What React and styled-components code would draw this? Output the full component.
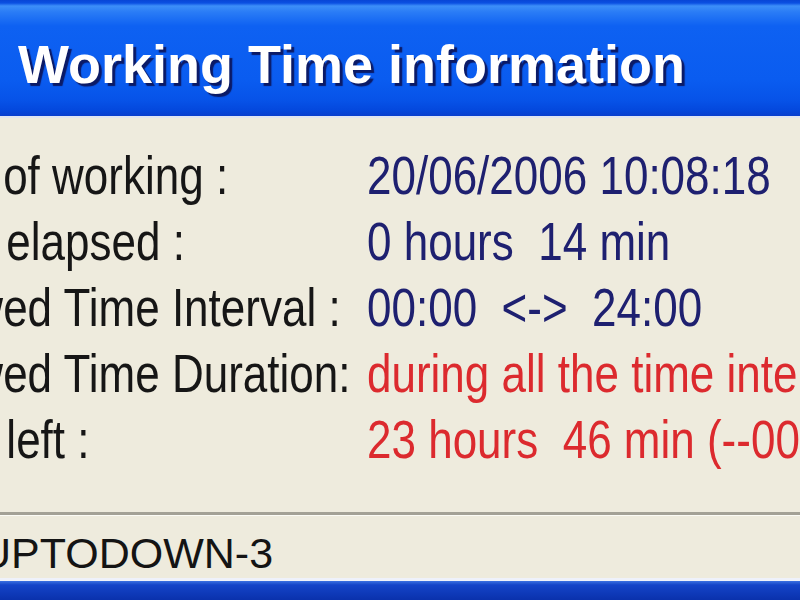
import React from "react";
import styled, { createGlobalStyle } from "styled-components";

const GlobalStyle = createGlobalStyle`
  html, body {
    margin: 0;
    padding: 0;
    width: 800px;
    height: 600px;
    overflow: hidden;
    background: #eeebdd;
  }
`;

const rows = [
  { label: "Start of working :", value: "20/06/2006 10:08:18", tone: "info" },
  { label: "Time elapsed :", value: "0 hours\u00a0\u00a014 min", tone: "info" },
  { label: "Allowed Time Interval :", value: "00:00\u00a0\u00a0<->\u00a0\u00a024:00", tone: "info" },
  { label: "Allowed Time Duration:", value: "during all the time interval", tone: "alert" },
  { label: "Time left :", value: "23 hours\u00a0\u00a046 min (--00:14)", tone: "alert" },
];

const ClockIcon = () => (
  <svg width="48" height="48" viewBox="0 0 48 48">
    <circle cx="24" cy="24" r="20" fill="#f4f6fb" stroke="#1b2a6e" strokeWidth="4" />
    <path d="M24 12 V24 H34" fill="none" stroke="#1b2a6e" strokeWidth="4" />
  </svg>
);

const App = () => {
  return (
    <>
      <GlobalStyle />
      <Window>
        <TitleBar>
          <TitleIcon>
            <ClockIcon />
          </TitleIcon>
          <Title>Working Time information</Title>
        </TitleBar>
        <Body>
          <InfoGrid>
            {rows.map((row) => (
              <React.Fragment key={row.label}>
                <Label>
                  <Glyphs>{row.label}</Glyphs>
                </Label>
                <Value $tone={row.tone}>
                  <Glyphs>{row.value}</Glyphs>
                </Value>
              </React.Fragment>
            ))}
          </InfoGrid>
        </Body>
        <Divider />
        <StatusBar>UPTODOWN-3</StatusBar>
        <BottomFrame />
      </Window>
    </>
  );
};

export default App;

const Window = styled.div`
  margin-left: -110px;
  width: 1240px;
  height: 600px;
  display: flex;
  flex-direction: column;
  background: #eeebdd;
`;

const TitleBar = styled.div`
  height: 118px;
  box-sizing: border-box;
  padding: 12px 0 0 64px;
  display: flex;
  align-items: center;
  gap: 16px;
  border-bottom: 2px solid #dfe5f2;
  background: linear-gradient(
    to bottom,
    #0846d6 0px,
    #0b50e2 3px,
    #3d8ff9 6px,
    #2a7cf6 12px,
    #0e61f2 26px,
    #0a5cf0 80px,
    #0753e8 100px,
    #0448dd 110px,
    #0a3cc8 118px
  );
`;

const TitleIcon = styled.div`
  width: 48px;
  height: 48px;
  flex-shrink: 0;
`;

const Title = styled.h1`
  margin: 0;
  font-family: "Liberation Sans", Arial, sans-serif;
  font-weight: bold;
  font-size: 54px;
  color: #ffffff;
  white-space: nowrap;
  text-shadow: 3px 3px 1px #0b1a66;
`;

const Body = styled.div`
  padding: 25px 0 39px 8px;
`;

const InfoGrid = styled.div`
  display: grid;
  grid-template-columns: 469px 1fr;
  grid-auto-rows: 66px;
  align-items: center;
  font-family: "Liberation Sans", Arial, sans-serif;
  font-size: 44px;
  line-height: 66px;
`;

// the dialog text is drawn a little taller than the stock face
const Glyphs = styled.span`
  display: inline-block;
  white-space: nowrap;
  transform: scaleY(1.2);
  transform-origin: center;
`;

const Label = styled.div`
  color: #161616;
  white-space: nowrap;
`;

const Value = styled.div`
  color: ${(p) => (p.$tone === "alert" ? "#dc2a2e" : "#1e2070")};
  white-space: nowrap;
`;

const Divider = styled.div`
  height: 3px;
  background: #a3a196;
  border-bottom: 1px solid #fbfbf5;
`;

const StatusBar = styled.div`
  height: 62px;
  box-sizing: border-box;
  padding: 12px 0 0 90px;
  display: flex;
  align-items: center;
  font-family: "Liberation Sans", Arial, sans-serif;
  font-size: 43px;
  color: #141414;
  white-space: nowrap;
`;

const BottomFrame = styled.div`
  flex: 1;
  border-top: 3px solid #eef1fa;
  background: linear-gradient(to bottom, #3a70e0 0px, #1444c8 4px, #0a31ac 100%);
`;
